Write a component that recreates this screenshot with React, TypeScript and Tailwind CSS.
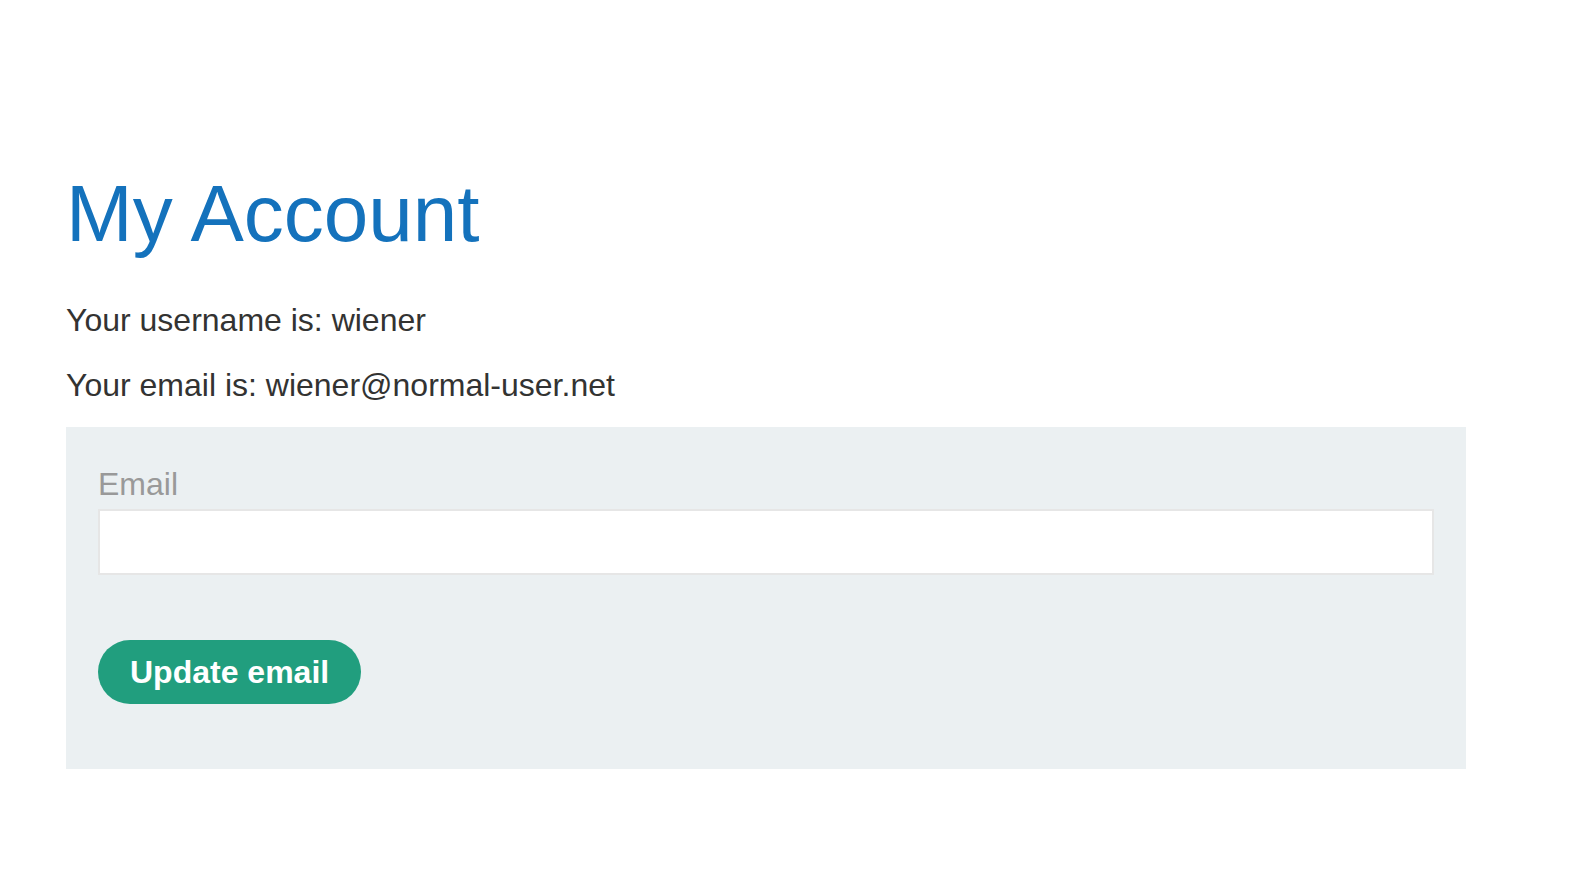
const App = () => {
  return (
    <div className="min-h-screen bg-white font-['Liberation_Sans',Arial,sans-serif] text-[#333332]">
      <div className="pl-[66px] pr-[126px] pt-[174px]">
        <h1 className="text-[80px] leading-[80px] text-[#1472bc] font-normal">My Account</h1>
        <p className="mt-[50px] text-[32px] leading-[32px]">Your username is: wiener</p>
        <p className="mt-[33px] text-[32px] leading-[32px]">Your email is: wiener@normal-user.net</p>
        <form
          className="mt-[26px] bg-[#ebf0f2] px-[32px] pt-[41px] pb-[65px]"
          onSubmit={(e) => e.preventDefault()}
        >
          <label className="block text-[32px] leading-[32px] text-[#999999]">Email</label>
          <input
            type="email"
            name="email"
            className="mt-[9px] block w-full h-[66px] bg-white border-2 border-[#e6e6e6] px-3 text-[32px] outline-none"
          />
          <button
            type="submit"
            className="mt-[65px] h-[64px] rounded-full bg-[#219e7e] px-[32px] text-[32px] leading-[64px] font-bold text-white"
          >
            Update email
          </button>
        </form>
      </div>
    </div>
  );
};

export default App;
